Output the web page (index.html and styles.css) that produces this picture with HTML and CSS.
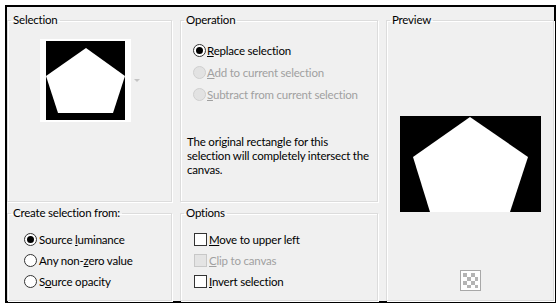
FILE: index.html
```html
<!DOCTYPE html>
<html lang="en">
<head>
    <meta charset="UTF-8">
    <title>Selection from Image</title>
    <link rel="stylesheet" href="styles.css">
</head>
<body>
    <div class="dialog">
        <fieldset class="group">
            <legend>Selection</legend>
            <div class="thumb-row">
                <div class="thumb">
                    <svg width="79" height="79" viewBox="0 0 79 79">
                        <rect width="79" height="79" fill="#000"/>
                        <polygon points="40,7 79,35 67,72 12,72 0,35" fill="#fff"/>
                    </svg>
                </div>
                <span class="drop-arrow"></span>
            </div>
        </fieldset>

        <fieldset class="group">
            <legend>Operation</legend>
            <div class="choices op-choices">
                <label class="choice"><span class="radio checked"></span><span><u>R</u>eplace selection</span></label>
                <label class="choice disabled"><span class="radio"></span><span><u>A</u>dd to current selection</span></label>
                <label class="choice disabled"><span class="radio"></span><span><u>S</u>ubtract from current selection</span></label>
            </div>
            <p class="note">The original rectangle for this<br>selection will completely intersect the<br>canvas.</p>
        </fieldset>

        <fieldset class="group preview">
            <legend>Preview</legend>
            <div class="preview-body">
                <svg class="preview-img" width="141" height="96" viewBox="0 0 141 96">
                    <rect width="141" height="96" fill="#000"/>
                    <polygon points="70,1 128,41 110,96 30,96 13,41" fill="#fff"/>
                </svg>
                <svg class="checker" width="21" height="21" viewBox="0 0 21 21">
                    <rect x="0.5" y="0.5" width="20" height="20" fill="#fff" stroke="#a8a8a8"/>
                    <g fill="#b4b4b4">
                        <rect x="3" y="3" width="4" height="4"/>
                        <rect x="11" y="3" width="4" height="4"/>
                        <rect x="7" y="7" width="4" height="4"/>
                        <rect x="15" y="7" width="3" height="4"/>
                        <rect x="3" y="11" width="4" height="4"/>
                        <rect x="11" y="11" width="4" height="4"/>
                        <rect x="7" y="15" width="4" height="3"/>
                        <rect x="15" y="15" width="3" height="3"/>
                    </g>
                </svg>
            </div>
        </fieldset>

        <fieldset class="group">
            <legend>Create selection from:</legend>
            <div class="choices low-choices create-choices">
                <label class="choice"><span class="radio checked"></span><span>Source <u>l</u>uminance</span></label>
                <label class="choice"><span class="radio"></span><span>Any non-<u>z</u>ero value</span></label>
                <label class="choice"><span class="radio"></span><span>S<u>o</u>urce opacity</span></label>
            </div>
        </fieldset>

        <fieldset class="group">
            <legend>Options</legend>
            <div class="choices low-choices opt-choices">
                <label class="choice"><span class="check"></span><span><u>M</u>ove to upper left</span></label>
                <label class="choice disabled"><span class="check"></span><span><u>C</u>lip to canvas</span></label>
                <label class="choice"><span class="check"></span><span><u>I</u>nvert selection</span></label>
            </div>
        </fieldset>
    </div>
</body>
</html>
```

FILE: styles.css
```css
body {
    margin: 0;
    padding: 5px 4px 5px 5px;
    background: #fff;
    font-family: Lato, "Noto Sans", Arial, sans-serif;
    font-size: 11.5px;
    letter-spacing: -0.2px;
    color: #000;
}

.dialog {
    width: 547px;
    height: 289px;
    border: 2px solid #000;
    background: #f0f0f0;
    padding-top: 5px;
    display: grid;
    grid-template-columns: 165px 198px 168px;
    grid-template-rows: 190px 96px;
    column-gap: 8px;
    row-gap: 3px;
}

.group {
    margin: 0;
    padding: 0;
    min-width: 0;
    border: 1px solid #dcdcdc;
    box-shadow: inset 1px 1px 0 #fff, 1px 1px 0 #fff;
    white-space: nowrap;
}

.group legend {
    margin-left: 3px;
    padding: 0 2px;
    line-height: 16px;
}

.preview {
    grid-column: 3;
    grid-row: 1 / 3;
}

/* selection thumbnail */
.thumb-row {
    display: flex;
    align-items: center;
    margin: 11px 0 0 32px;
}

.thumb {
    background: #fff;
    padding: 2px 6px;
    line-height: 0;
}

.drop-arrow {
    width: 0;
    height: 0;
    margin-left: 3px;
    border-left: 3px solid transparent;
    border-right: 3px solid transparent;
    border-top: 3px solid #c4c4c4;
}

/* radio and check rows */
.choices {
    display: flex;
    flex-direction: column;
}

.choice {
    display: flex;
    align-items: center;
    gap: 2px;
    height: 22px;
}

.choice.disabled {
    color: #a0a0a0;
}

.op-choices {
    margin: 11px 0 0 12px;
}

.op-choices .choice {
    gap: 1px;
}

.low-choices {
    margin-top: 8px;
}

.low-choices .choice {
    height: 21px;
}

.create-choices {
    margin-left: 16px;
}

.opt-choices {
    margin-left: 13px;
}

.radio {
    box-sizing: border-box;
    width: 13px;
    height: 13px;
    border: 1px solid #333;
    border-radius: 50%;
    background: #fff;
    display: flex;
    align-items: center;
    justify-content: center;
}

.radio.checked::after {
    content: "";
    width: 7px;
    height: 7px;
    border-radius: 50%;
    background: #000;
}

.disabled .radio {
    border-color: #cfcfcf;
    background: #e2e2e2;
}

.check {
    box-sizing: border-box;
    width: 13px;
    height: 13px;
    border: 1px solid #333;
    background: #fff;
}

.disabled .check {
    border-color: #c8c8c8;
    background: #e4e4e4;
}

.note {
    margin: 30px 0 0 6px;
    line-height: 14px;
}

/* preview */
.preview-body {
    display: flex;
    flex-direction: column;
    align-items: center;
}

.preview-img {
    margin-top: 88px;
}

.checker {
    margin-top: 58px;
}
```
